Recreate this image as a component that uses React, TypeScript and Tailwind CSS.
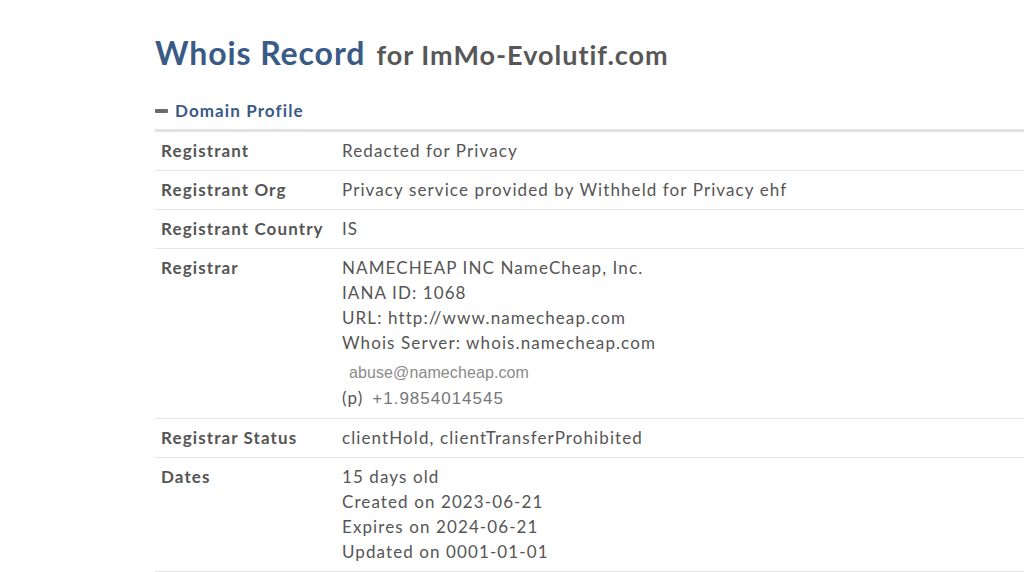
const rows: { label: string; lines: React.ReactNode[] }[] = [
  { label: "Registrant", lines: ["Redacted for Privacy"] },
  { label: "Registrant Org", lines: ["Privacy service provided by Withheld for Privacy ehf"] },
  { label: "Registrant Country", lines: ["IS"] },
];

const Row = ({ label, children }: { label: string; children: React.ReactNode }) => (
  <div className="flex border-b border-[#e6e6e6] pt-[6px] pb-[7px]">
    <div className="w-[187px] shrink-0 pl-[6px] font-bold">{label}</div>
    <div className="flex-1">{children}</div>
  </div>
);

export default function App() {
  return (
    <div
      className="h-[572px] w-[1024px] overflow-hidden bg-white text-[#555] tracking-[1.1px]"
      style={{ fontFamily: "Lato, 'Open Sans', sans-serif" }}
    >
      <div className="w-[1100px] pl-[155px] pt-[33px]">
        <h1 className="flex items-baseline leading-[40px]">
          <span className="text-[32px] font-bold tracking-[0.9px] text-[#3a5a88]">Whois Record</span>
          <span className="ml-[11px] text-[27px] font-bold tracking-[1px] text-[#575757]">
            for ImMo-Evolutif.com
          </span>
        </h1>

        <div className="mt-[26px] flex items-center text-[17px] font-bold text-[#3a5a88]">
          <span className="mr-[7px] inline-block h-[4px] w-[13px] rounded-[1px] bg-[#6b6b6b]" />
          <span className="leading-[20px]">Domain Profile</span>
        </div>

        <div className="mt-[8px] border-t-[3px] border-[#e2e2e2] text-[17px] leading-[25px]">
          {rows.map((r) => (
            <Row key={r.label} label={r.label}>
              {r.lines}
            </Row>
          ))}
          <Row label="Registrar">
            <div>NAMECHEAP INC NameCheap, Inc.</div>
            <div>IANA ID: 1068</div>
            <div>URL: http://www.namecheap.com</div>
            <div>Whois Server: whois.namecheap.com</div>
            <div
              className="mt-[5px] pl-[7px] text-[16px] tracking-[0.1px] text-[#8a8a8a]"
              style={{ fontFamily: "'Liberation Sans', Arial, sans-serif" }}
            >
              abuse@namecheap.com
            </div>
            <div className="flex items-baseline">
              <span>(p)</span>
              <span
                className="ml-[9px] text-[17px] tracking-[1px] text-[#777]"
                style={{ fontFamily: "'Liberation Sans', Arial, sans-serif" }}
              >
                +1.9854014545
              </span>
            </div>
          </Row>
          <Row label="Registrar Status">clientHold, clientTransferProhibited</Row>
          <Row label="Dates">
            <div>15 days old</div>
            <div>Created on 2023-06-21</div>
            <div>Expires on 2024-06-21</div>
            <div>Updated on 0001-01-01</div>
          </Row>
        </div>
      </div>
    </div>
  );
}
